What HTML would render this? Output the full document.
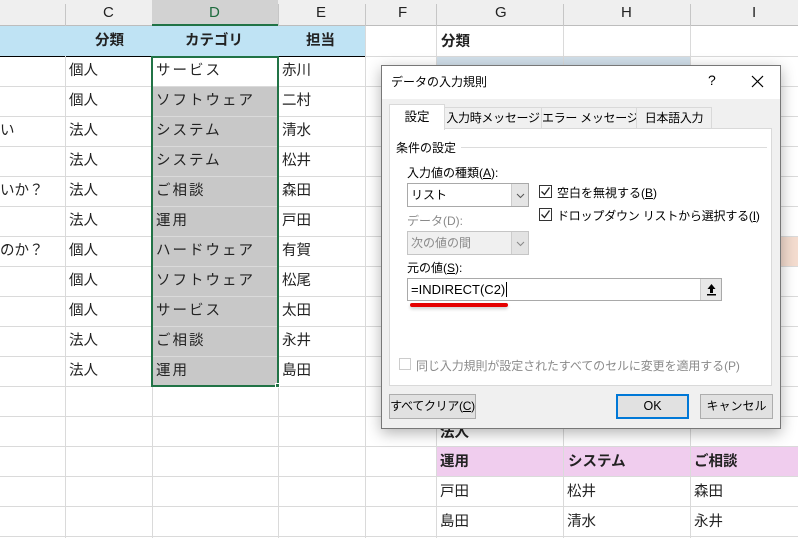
<!DOCTYPE html>
<html><head><meta charset="utf-8"><style>
*{box-sizing:border-box;margin:0;padding:0}
body{width:798px;height:538px;overflow:hidden;background:#fff;position:relative;font-family:"Liberation Sans","Noto Sans CJK JP",sans-serif;font-size:14px;color:#222}
.a{position:absolute;white-space:nowrap}
.vl{position:absolute;width:1px;background:#dadada}
.hl{position:absolute;height:1px;background:#dadada}
.t{position:absolute;white-space:nowrap;line-height:31px;font-size:14.5px}
.b{font-weight:bold}
.dlg{font-size:12.5px;color:#000}
.btn{position:absolute;border:1px solid #adadad;background:#e1e1e1;text-align:center;line-height:23px;font-size:12.5px;white-space:nowrap}
.cb{position:absolute;width:13px;height:13px;border:1px solid #333;background:#fff}
.tab{position:absolute;top:41px;height:22px;border:1px solid #d9d9d9;background:#f0f0f0;text-align:center;line-height:20px;font-size:12px;white-space:nowrap;overflow:hidden;letter-spacing:-0.3px}
</style></head><body>
<div class="a" style="left:0;top:0;width:798px;height:26px;background:#efefef;border-bottom:1px solid #bdbdbd"></div>
<div class="a" style="left:152px;top:0;width:126px;height:26px;background:#d2d2d2;border-bottom:2px solid #217346"></div>
<div class="t" style="left:103px;top:0;line-height:26px;font-size:15px">C</div>
<div class="t" style="left:209px;top:0;line-height:26px;font-size:15px;color:#1e6b3e">D</div>
<div class="t" style="left:316px;top:0;line-height:26px;font-size:15px">E</div>
<div class="t" style="left:398px;top:0;line-height:26px;font-size:15px">F</div>
<div class="t" style="left:495px;top:0;line-height:26px;font-size:15px">G</div>
<div class="t" style="left:621px;top:0;line-height:26px;font-size:15px">H</div>
<div class="t" style="left:752px;top:0;line-height:26px;font-size:15px">I</div>
<div class="a" style="left:65px;top:4px;width:1px;height:22px;background:#c6c6c6"></div>
<div class="a" style="left:278px;top:4px;width:1px;height:22px;background:#c6c6c6"></div>
<div class="a" style="left:365px;top:4px;width:1px;height:22px;background:#c6c6c6"></div>
<div class="a" style="left:436px;top:4px;width:1px;height:22px;background:#c6c6c6"></div>
<div class="a" style="left:563px;top:4px;width:1px;height:22px;background:#c6c6c6"></div>
<div class="a" style="left:690px;top:4px;width:1px;height:22px;background:#c6c6c6"></div>
<div class="a" style="left:0;top:26px;width:365px;height:30px;background:#bfe3f4"></div>
<div class="a" style="left:0;top:56px;width:365px;height:1px;background:#000"></div>
<div class="a" style="left:436px;top:56px;width:254px;height:30px;background:#d1dfea"></div>
<div class="a" style="left:690px;top:236px;width:108px;height:30px;background:#f4dccf"></div>
<div class="a" style="left:436px;top:446px;width:362px;height:30px;background:#f0cdee"></div>
<div class="a" style="left:152px;top:86px;width:126px;height:300px;background:#c8c8c8"></div>
<div class="vl" style="left:65px;top:56px;height:482px"></div>
<div class="vl" style="left:152px;top:56px;height:482px"></div>
<div class="vl" style="left:278px;top:56px;height:482px"></div>
<div class="vl" style="left:365px;top:26px;height:512px"></div>
<div class="vl" style="left:436px;top:26px;height:512px"></div>
<div class="vl" style="left:563px;top:26px;height:512px"></div>
<div class="vl" style="left:690px;top:26px;height:512px"></div>
<div class="hl" style="left:365px;top:56px;width:433px"></div>
<div class="hl" style="left:0;top:86px;width:798px"></div>
<div class="hl" style="left:0;top:116px;width:798px"></div>
<div class="hl" style="left:0;top:146px;width:798px"></div>
<div class="hl" style="left:0;top:176px;width:798px"></div>
<div class="hl" style="left:0;top:206px;width:798px"></div>
<div class="hl" style="left:0;top:236px;width:798px"></div>
<div class="hl" style="left:0;top:266px;width:798px"></div>
<div class="hl" style="left:0;top:296px;width:798px"></div>
<div class="hl" style="left:0;top:326px;width:798px"></div>
<div class="hl" style="left:0;top:356px;width:798px"></div>
<div class="hl" style="left:0;top:386px;width:798px"></div>
<div class="hl" style="left:0;top:416px;width:798px"></div>
<div class="hl" style="left:0;top:446px;width:798px"></div>
<div class="hl" style="left:0;top:476px;width:798px"></div>
<div class="hl" style="left:0;top:506px;width:798px"></div>
<div class="hl" style="left:0;top:536px;width:798px"></div>
<div class="a" style="left:151px;top:56px;width:128px;height:331px;border:2px solid #217346"></div>
<div class="a" style="left:275px;top:383px;width:5px;height:5px;background:#217346;border:1px solid #fff"></div>
<div class="t b" style="left:95px;top:26px">分類</div>
<div class="t b" style="left:185px;top:26px">カテゴリ</div>
<div class="t b" style="left:306px;top:26px">担当</div>
<div class="t b" style="left:441px;top:27px">分類</div>
<div class="t" style="left:0;top:116px">い</div>
<div class="t" style="left:0;top:176px">いか？</div>
<div class="t" style="left:0;top:236px">のか？</div>
<div class="t" style="left:69px;top:56px">個人</div><div class="t" style="left:156px;top:56px;letter-spacing:2px">サービス</div><div class="t" style="left:282px;top:56px">赤川</div>
<div class="t" style="left:69px;top:86px">個人</div><div class="t" style="left:156px;top:86px;letter-spacing:2px">ソフトウェア</div><div class="t" style="left:282px;top:86px">二村</div>
<div class="t" style="left:69px;top:116px">法人</div><div class="t" style="left:156px;top:116px;letter-spacing:2px">システム</div><div class="t" style="left:282px;top:116px">清水</div>
<div class="t" style="left:69px;top:146px">法人</div><div class="t" style="left:156px;top:146px;letter-spacing:2px">システム</div><div class="t" style="left:282px;top:146px">松井</div>
<div class="t" style="left:69px;top:176px">法人</div><div class="t" style="left:156px;top:176px;letter-spacing:2px">ご相談</div><div class="t" style="left:282px;top:176px">森田</div>
<div class="t" style="left:69px;top:206px">法人</div><div class="t" style="left:156px;top:206px;letter-spacing:2px">運用</div><div class="t" style="left:282px;top:206px">戸田</div>
<div class="t" style="left:69px;top:236px">個人</div><div class="t" style="left:156px;top:236px;letter-spacing:2px">ハードウェア</div><div class="t" style="left:282px;top:236px">有賀</div>
<div class="t" style="left:69px;top:266px">個人</div><div class="t" style="left:156px;top:266px;letter-spacing:2px">ソフトウェア</div><div class="t" style="left:282px;top:266px">松尾</div>
<div class="t" style="left:69px;top:296px">個人</div><div class="t" style="left:156px;top:296px;letter-spacing:2px">サービス</div><div class="t" style="left:282px;top:296px">太田</div>
<div class="t" style="left:69px;top:326px">法人</div><div class="t" style="left:156px;top:326px;letter-spacing:2px">ご相談</div><div class="t" style="left:282px;top:326px">永井</div>
<div class="t" style="left:69px;top:356px">法人</div><div class="t" style="left:156px;top:356px;letter-spacing:2px">運用</div><div class="t" style="left:282px;top:356px">島田</div>
<div class="t b" style="left:440px;top:418px">法人</div>
<div class="t b" style="left:440px;top:447px">運用</div><div class="t b" style="left:568px;top:447px">システム</div><div class="t b" style="left:694px;top:447px">ご相談</div>
<div class="t" style="left:440px;top:477px">戸田</div><div class="t" style="left:567px;top:477px">松井</div><div class="t" style="left:694px;top:477px">森田</div>
<div class="t" style="left:440px;top:507px">島田</div><div class="t" style="left:567px;top:507px">清水</div><div class="t" style="left:694px;top:507px">永井</div>
<div class="a dlg" style="left:381px;top:65px;width:400px;height:364px;background:#f0f0f0;border:1px solid #777;box-shadow:0 4px 14px rgba(0,0,0,.3)">
  <div class="a" style="left:0;top:0;width:398px;height:33px;background:#fff"></div>
  <div class="a" style="left:9px;top:7px;font-size:12px">データの入力規則</div>
  <div class="a" style="left:326px;top:6px;font-size:14px">?</div>
  <svg class="a" style="left:369px;top:9px" width="13" height="13"><path d="M1 1L12 12M12 1L1 12" stroke="#000" stroke-width="1.2"/></svg>
  <div class="a" style="left:7px;top:62px;width:383px;height:258px;background:#fff;border:1px solid #d9d9d9"></div>
  <div class="tab" style="left:62px;width:98px">入力時メッセージ</div>
  <div class="tab" style="left:159px;width:96px">エラー メッセージ</div>
  <div class="tab" style="left:254px;width:76px">日本語入力</div>
  <div class="a" style="left:7px;top:38px;width:56px;height:26px;border:1px solid #d9d9d9;border-bottom:none;background:#fff;text-align:center;line-height:24px;font-size:12.5px">設定</div>
  <div class="a" style="left:14px;top:73px;font-size:12px">条件の設定</div>
  <div class="a" style="left:79px;top:81px;width:306px;height:1px;background:#dcdcdc"></div>
  <div class="a" style="left:25px;top:98px;font-size:12px">入力値の種類(<u>A</u>):</div>
  <div class="a" style="left:25px;top:117px;width:122px;height:24px;border:1px solid #a9a9a9;background:#fff;line-height:22px;padding-left:3px;font-size:12px">リスト</div>
  <div class="a" style="left:129px;top:118px;width:17px;height:22px;background:#e5e5e5;border-left:1px solid #ccc"><svg width="17" height="22"><path d="M5 10L8.5 13.5L12 10" fill="none" stroke="#555"/></svg></div>
  <div class="cb" style="left:157px;top:119px"><svg width="11" height="11" style="display:block"><path d="M1.5 5.5L4.5 8.5L9.5 1.5" fill="none" stroke="#222" stroke-width="1.3"/></svg></div>
  <div class="a" style="left:175px;top:118px;font-size:12px">空白を無視する(<u>B</u>)</div>
  <div class="cb" style="left:157px;top:142px"><svg width="11" height="11" style="display:block"><path d="M1.5 5.5L4.5 8.5L9.5 1.5" fill="none" stroke="#222" stroke-width="1.3"/></svg></div>
  <div class="a" style="left:175px;top:141px;font-size:12px;letter-spacing:-0.2px">ドロップダウン リストから選択する(<u>I</u>)</div>
  <div class="a" style="left:25px;top:146px;color:#8a8a8a;font-size:12px">データ(D):</div>
  <div class="a" style="left:25px;top:165px;width:122px;height:24px;border:1px solid #c5c5c5;background:#f0f0f0;line-height:22px;padding-left:3px;color:#8a8a8a;font-size:12px">次の値の間</div>
  <div class="a" style="left:129px;top:166px;width:17px;height:22px;background:#e3e3e3;border-left:1px solid #ccc"><svg width="17" height="22"><path d="M5 10L8.5 13.5L12 10" fill="none" stroke="#888"/></svg></div>
  <div class="a" style="left:25px;top:193px;font-size:12px">元の値(<u>S</u>):</div>
  <div class="a" style="left:25px;top:212px;width:315px;height:23px;border:1px solid #a9a9a9;background:#fff;line-height:21px;padding-left:3px;font-size:13px">=INDIRECT(C2)<span style="border-left:1px solid #000;margin-left:1px"></span></div>
  <div class="a" style="left:318px;top:213px;width:21px;height:21px;background:#e8e8e8;border-left:1px solid #ccc"><svg width="21" height="21"><path d="M10.5 5L6.5 10H9V14H12V10H14.5Z" fill="#000"/><rect x="6" y="15" width="9" height="1.5" fill="#000"/></svg></div>
  <div class="a" style="left:28px;top:237px;width:98px;height:4px;background:#e50000;border-radius:2px;box-shadow:0 2px 3px rgba(0,0,0,.2)"></div>
  <div class="a" style="left:17px;top:292px;width:12px;height:12px;border:1px solid #ccc;background:#fff"></div>
  <div class="a" style="left:34px;top:291px;color:#8a8a8a;font-size:12px;letter-spacing:-0.1px">同じ入力規則が設定されたすべてのセルに変更を適用する(P)</div>
  <div class="btn" style="left:7px;top:328px;width:87px;height:25px;font-size:12px;letter-spacing:-0.3px">すべてクリア(<u>C</u>)</div>
  <div class="btn" style="left:234px;top:328px;width:73px;height:25px;border:2px solid #0078d7;line-height:21px">OK</div>
  <div class="btn" style="left:318px;top:328px;width:73px;height:25px;font-size:12px">キャンセル</div>
</div>
</body></html>
